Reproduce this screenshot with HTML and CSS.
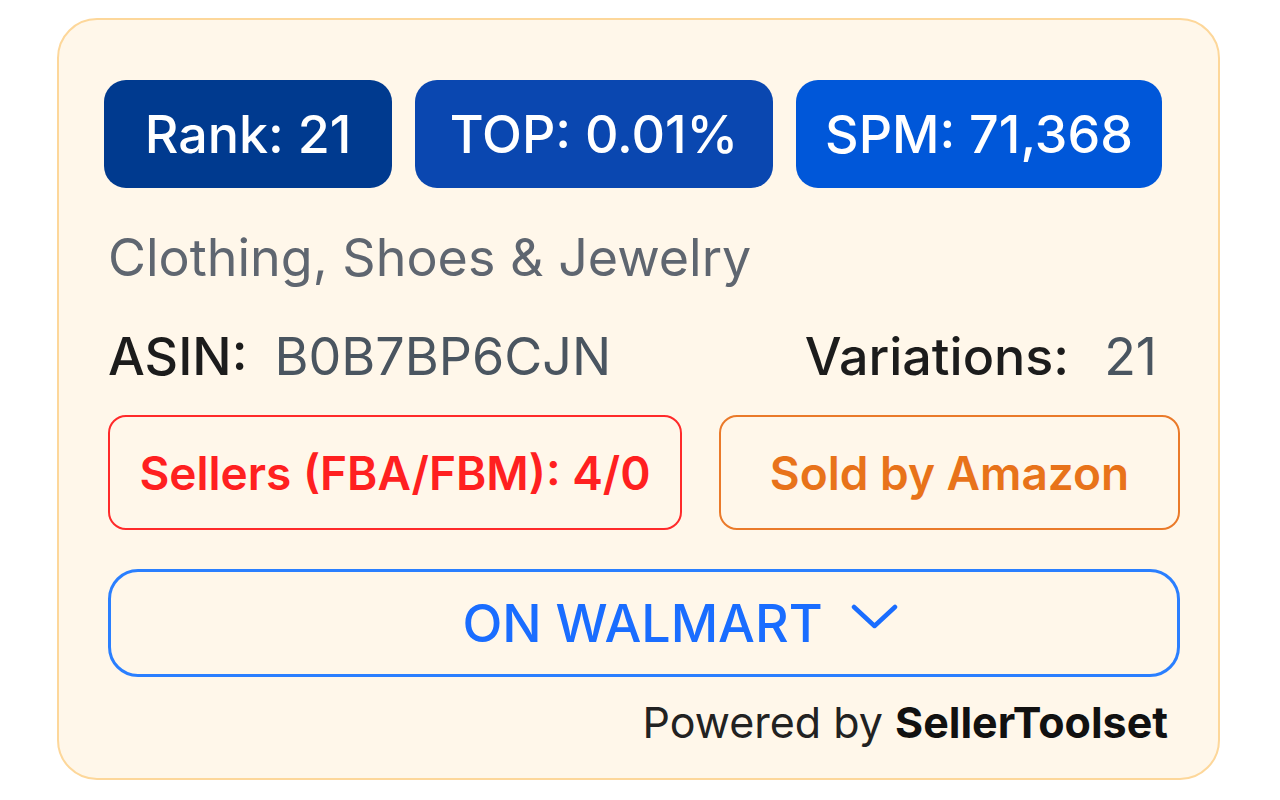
FILE: index.html
```html
<!DOCTYPE html>
<html>
<head>
<meta charset="utf-8">
<link rel="stylesheet" href="styles.css">
</head>
<body>
<div class="card">
  <div class="badges">
    <div class="badge b1">Rank: 21</div>
    <div class="badge b2">TOP: 0.01%</div>
    <div class="badge b3">SPM: 71,368</div>
  </div>
  <div class="category">Clothing, Shoes &amp; Jewelry</div>
  <div class="info">
    <div class="asin"><span class="label">ASIN:</span><span class="val">B0B7BP6CJN</span></div>
    <div class="vars"><span class="label">Variations:</span><span class="val">21</span></div>
  </div>
  <div class="boxes">
    <div class="box sellers">Sellers (FBA/FBM): 4/0</div>
    <div class="box sold">Sold by Amazon</div>
  </div>
  <div class="walmart"><span class="wtext">ON WALMART</span>
    <svg class="chev" width="47" height="25" viewBox="0 0 47 25"><path d="M3 3 L23.5 22 L44 3" fill="none" stroke="#1a6dff" stroke-width="4.5" stroke-linecap="round" stroke-linejoin="round"/></svg>
  </div>
  <div class="powered">Powered by <b>SellerToolset</b></div>
</div>
</body>
</html>
```
FILE: styles.css
```css
html, body {
  margin: 0;
  padding: 0;
  background: #ffffff;
}
body {
  width: 1280px;
  height: 800px;
  font-family: Inter, "Noto Sans", sans-serif;
}
.card {
  box-sizing: border-box;
  margin: 18px 0 0 57px;
  width: 1163px;
  height: 762px;
  background: #fff7ea;
  border: 2px solid #fdd79a;
  border-radius: 40px;
  padding: 60px 38px 0 49px;
  display: flex;
  flex-direction: column;
}
.badges {
  display: flex;
  gap: 23px;
  margin-left: -4px;
}
.badge {
  height: 108px;
  border-radius: 22px;
  color: #fff;
  font-size: 52px;
  font-weight: 500;
  display: flex;
  align-items: center;
  justify-content: center;
  box-sizing: border-box;
}
.b1 { width: 288px; background: #003a8f; }
.b2 { width: 358px; background: #0a47b0; }
.b3 { width: 366px; background: #0057d9; }
.category {
  margin-top: 44px;
  font-size: 52px;
  color: #5f6670;
  line-height: 52px;
}
.info {
  margin-top: 47px;
  display: flex;
  justify-content: space-between;
  align-items: center;
  font-size: 52px;
  line-height: 52px;
  padding-right: 23px;
}
.label { color: #1c1c1c; font-weight: 500; }
.val { color: #4a5560; margin-left: 27px; }
.vars .val { margin-left: 35px; }
.boxes {
  margin-top: 32px;
  display: flex;
  justify-content: space-between;
}
.box {
  box-sizing: border-box;
  height: 115px;
  border-radius: 18px;
  border: 2.5px solid;
  display: flex;
  align-items: center;
  justify-content: center;
  font-size: 46px;
  font-weight: 600;
}
.sellers { width: 574px; color: #ff2020; border-color: #ff2a2a; }
.sold { width: 461px; color: #e8731a; border-color: #ea7a2a; }
.walmart {
  margin-top: 39px;
  box-sizing: border-box;
  height: 108px;
  border: 3px solid #2a7fff;
  border-radius: 30px;
  display: flex;
  align-items: center;
  justify-content: center;
  gap: 28px;
  color: #1a6dff;
  font-size: 52px;
  font-weight: 500;
  padding-left: 72px;
}
.chev { margin-top: -14px; }
.powered {
  margin-top: 23px;
  text-align: right;
  padding-right: 12px;
  font-size: 43px;
  line-height: 44px;
  color: #222;
}
.powered b { font-weight: 700; color: #111; }
```
